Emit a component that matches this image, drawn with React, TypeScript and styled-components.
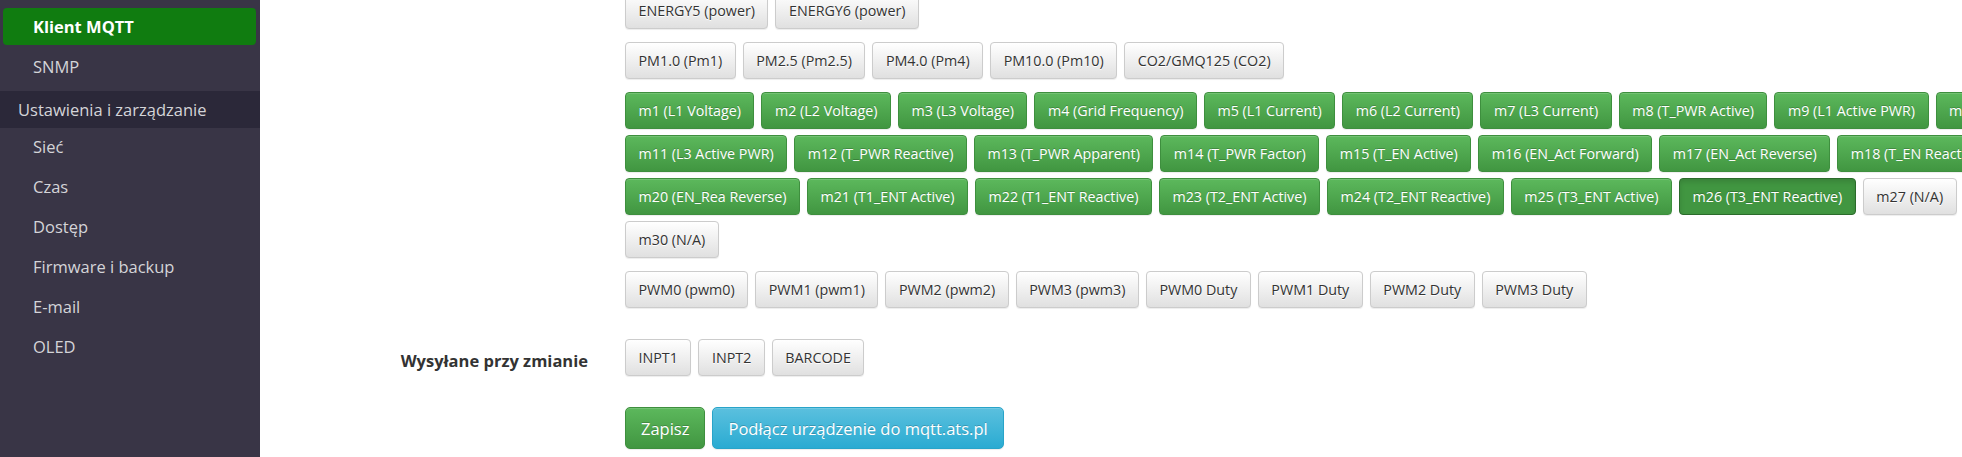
import React from "react";
import styled, { createGlobalStyle, css } from "styled-components";

const GlobalStyle = createGlobalStyle`
  html, body {
    margin: 0;
    padding: 0;
    overflow: hidden;
    background: #fff;
    font-family: "Open Sans", "Liberation Sans", sans-serif;
  }
`;

const Page = styled.div`
  display: flex;
  height: 457px;
  width: 100%;
`;

const Sidebar = styled.nav`
  width: 260px;
  flex-shrink: 0;
  background: #393546;
  padding: 8px 0 0;
  box-sizing: border-box;
  display: flex;
  flex-direction: column;
`;

const NavItem = styled.a<{ $active?: boolean }>`
  display: block;
  height: 40px;
  line-height: 38px;
  padding-left: 30px;
  margin: 0 4px 0 3px;
  font-size: 16.5px;
  color: #d4d4d8;
  text-decoration: none;
  box-sizing: border-box;

  ${(p) =>
    p.$active &&
    css`
      height: 37px;
      line-height: 37px;
      margin-bottom: 3px;
      background: #107c10;
      color: #fff;
      font-weight: bold;
      border-radius: 4px;
    `}
`;

const NavHeader = styled.div`
  height: 37px;
  line-height: 37px;
  margin: 3px 0 0;
  padding-left: 18px;
  font-size: 16.5px;
  color: #d4d4d8;
  background: #2b2839;
`;

const Main = styled.main`
  flex: 1;
  min-width: 0;
  overflow: hidden;
`;

const Content = styled.div`
  margin-top: -8px;
  display: flex;
  flex-direction: column;
`;

const FormRow = styled.div<{ $spaced?: boolean }>`
  display: grid;
  grid-template-columns: 346px 1fr;
  margin-top: ${(p) => (p.$spaced ? "31px" : "0")};
`;

const Label = styled.label`
  text-align: right;
  padding: 9px 18px 0 0;
  font-size: 16.5px;
  line-height: 25px;
  font-weight: bold;
  color: #333;
`;

const Field = styled.div`
  padding-left: 19px;
  display: flex;
  flex-direction: column;
  gap: 13px;
`;

const Group = styled.div`
  display: flex;
  flex-direction: column;
  gap: 6px;
`;

const ButtonRow = styled.div`
  display: flex;
  gap: 7px;
  white-space: nowrap;
`;

type Variant = "default" | "success" | "info";

const variants = {
  default: css`
    color: #333;
    background-image: linear-gradient(to bottom, #fff 0, #e0e0e0 100%);
    border-color: #ccc;
    text-shadow: 0 1px 0 #fff;
  `,
  success: css`
    color: #fff;
    background-image: linear-gradient(to bottom, #5cb85c 0, #419641 100%);
    border-color: #3e8f3e;
    text-shadow: 0 -1px 0 rgba(0, 0, 0, 0.2);
  `,
  info: css`
    color: #fff;
    background-image: linear-gradient(to bottom, #5bc0de 0, #2aabd2 100%);
    border-color: #28a4c9;
    text-shadow: 0 -1px 0 rgba(0, 0, 0, 0.2);
  `,
};

const Button = styled.button<{ $variant?: Variant; $large?: boolean; $active?: boolean }>`
  flex-shrink: 0;
  font-family: inherit;
  border: 1px solid;
  border-radius: 4px;
  cursor: pointer;
  box-shadow: inset 0 1px 0 rgba(255, 255, 255, 0.15), 0 1px 1px rgba(0, 0, 0, 0.075);
  ${(p) => variants[p.$variant || "default"]}

  ${(p) =>
    p.$large
      ? css`
          font-size: 16.5px;
          line-height: 25px;
          padding: 7.5px 15px;
          border-radius: 5px;
        `
      : css`
          font-size: 14.3px;
          line-height: 22px;
          padding: 6.5px 12.5px;
        `}

  ${(p) =>
    p.$active &&
    css`
      background-image: none;
      background-color: #419641;
      border-color: #2b6b2b;
      box-shadow: inset 0 3px 5px rgba(0, 0, 0, 0.125);
    `}
`;

const sensorRows = [
  ["ENERGY5 (power)", "ENERGY6 (power)"],
  ["PM1.0 (Pm1)", "PM2.5 (Pm2.5)", "PM4.0 (Pm4)", "PM10.0 (Pm10)", "CO2/GMQ125 (CO2)"],
];

const meterRows = [
  [
    "m1 (L1 Voltage)", "m2 (L2 Voltage)", "m3 (L3 Voltage)", "m4 (Grid Frequency)",
    "m5 (L1 Current)", "m6 (L2 Current)", "m7 (L3 Current)", "m8 (T_PWR Active)",
    "m9 (L1 Active PWR)", "m10 (L2 Active PWR)",
  ],
  [
    "m11 (L3 Active PWR)", "m12 (T_PWR Reactive)", "m13 (T_PWR Apparent)", "m14 (T_PWR Factor)",
    "m15 (T_EN Active)", "m16 (EN_Act Forward)", "m17 (EN_Act Reverse)", "m18 (T_EN Reactive)",
    "m19 (EN_Rea Forward)",
  ],
  [
    "m20 (EN_Rea Reverse)", "m21 (T1_ENT Active)", "m22 (T1_ENT Reactive)", "m23 (T2_ENT Active)",
    "m24 (T2_ENT Reactive)", "m25 (T3_ENT Active)", "m26 (T3_ENT Reactive)", "m27 (N/A)",
    "m28 (N/A)", "m29 (N/A)",
  ],
  ["m30 (N/A)"],
];

// które m-ki są zaznaczone (zielone)
const selectedMeters = 26;

const pwmRow = [
  "PWM0 (pwm0)", "PWM1 (pwm1)", "PWM2 (pwm2)", "PWM3 (pwm3)",
  "PWM0 Duty", "PWM1 Duty", "PWM2 Duty", "PWM3 Duty",
];

const onChangeRow = ["INPT1", "INPT2", "BARCODE"];

const navItems = ["Sieć", "Czas", "Dostęp", "Firmware i backup", "E-mail", "OLED"];

const meterIndex = (label: string) => parseInt(label.slice(1), 10);

const App: React.FC = () => {
  return (
    <>
      <GlobalStyle />
      <Page>
        <Sidebar>
          <NavItem $active>Klient MQTT</NavItem>
          <NavItem>SNMP</NavItem>
          <NavHeader>Ustawienia i zarządzanie</NavHeader>
          {navItems.map((item) => (
            <NavItem key={item}>{item}</NavItem>
          ))}
        </Sidebar>

        <Main>
          <Content>
            <FormRow>
              <div />
              <Field>
                {sensorRows.map((row, i) => (
                  <ButtonRow key={i}>
                    {row.map((b) => (
                      <Button key={b}>{b}</Button>
                    ))}
                  </ButtonRow>
                ))}
                <Group>
                  {meterRows.map((row, i) => (
                    <ButtonRow key={i}>
                      {row.map((b) => {
                        const n = meterIndex(b);
                        return (
                          <Button
                            key={b}
                            $variant={n <= selectedMeters ? "success" : "default"}
                            $active={n === selectedMeters}
                          >
                            {b}
                          </Button>
                        );
                      })}
                    </ButtonRow>
                  ))}
                </Group>
                <ButtonRow>
                  {pwmRow.map((b) => (
                    <Button key={b}>{b}</Button>
                  ))}
                </ButtonRow>
              </Field>
            </FormRow>

            <FormRow $spaced>
              <Label>Wysyłane przy zmianie</Label>
              <Field>
                <ButtonRow>
                  {onChangeRow.map((b) => (
                    <Button key={b}>{b}</Button>
                  ))}
                </ButtonRow>
              </Field>
            </FormRow>

            <FormRow $spaced>
              <div />
              <Field>
                <ButtonRow>
                  <Button $variant="success" $large>
                    Zapisz
                  </Button>
                  <Button $variant="info" $large>
                    Podłącz urządzenie do mqtt.ats.pl
                  </Button>
                </ButtonRow>
              </Field>
            </FormRow>
          </Content>
        </Main>
      </Page>
    </>
  );
};

export default App;
